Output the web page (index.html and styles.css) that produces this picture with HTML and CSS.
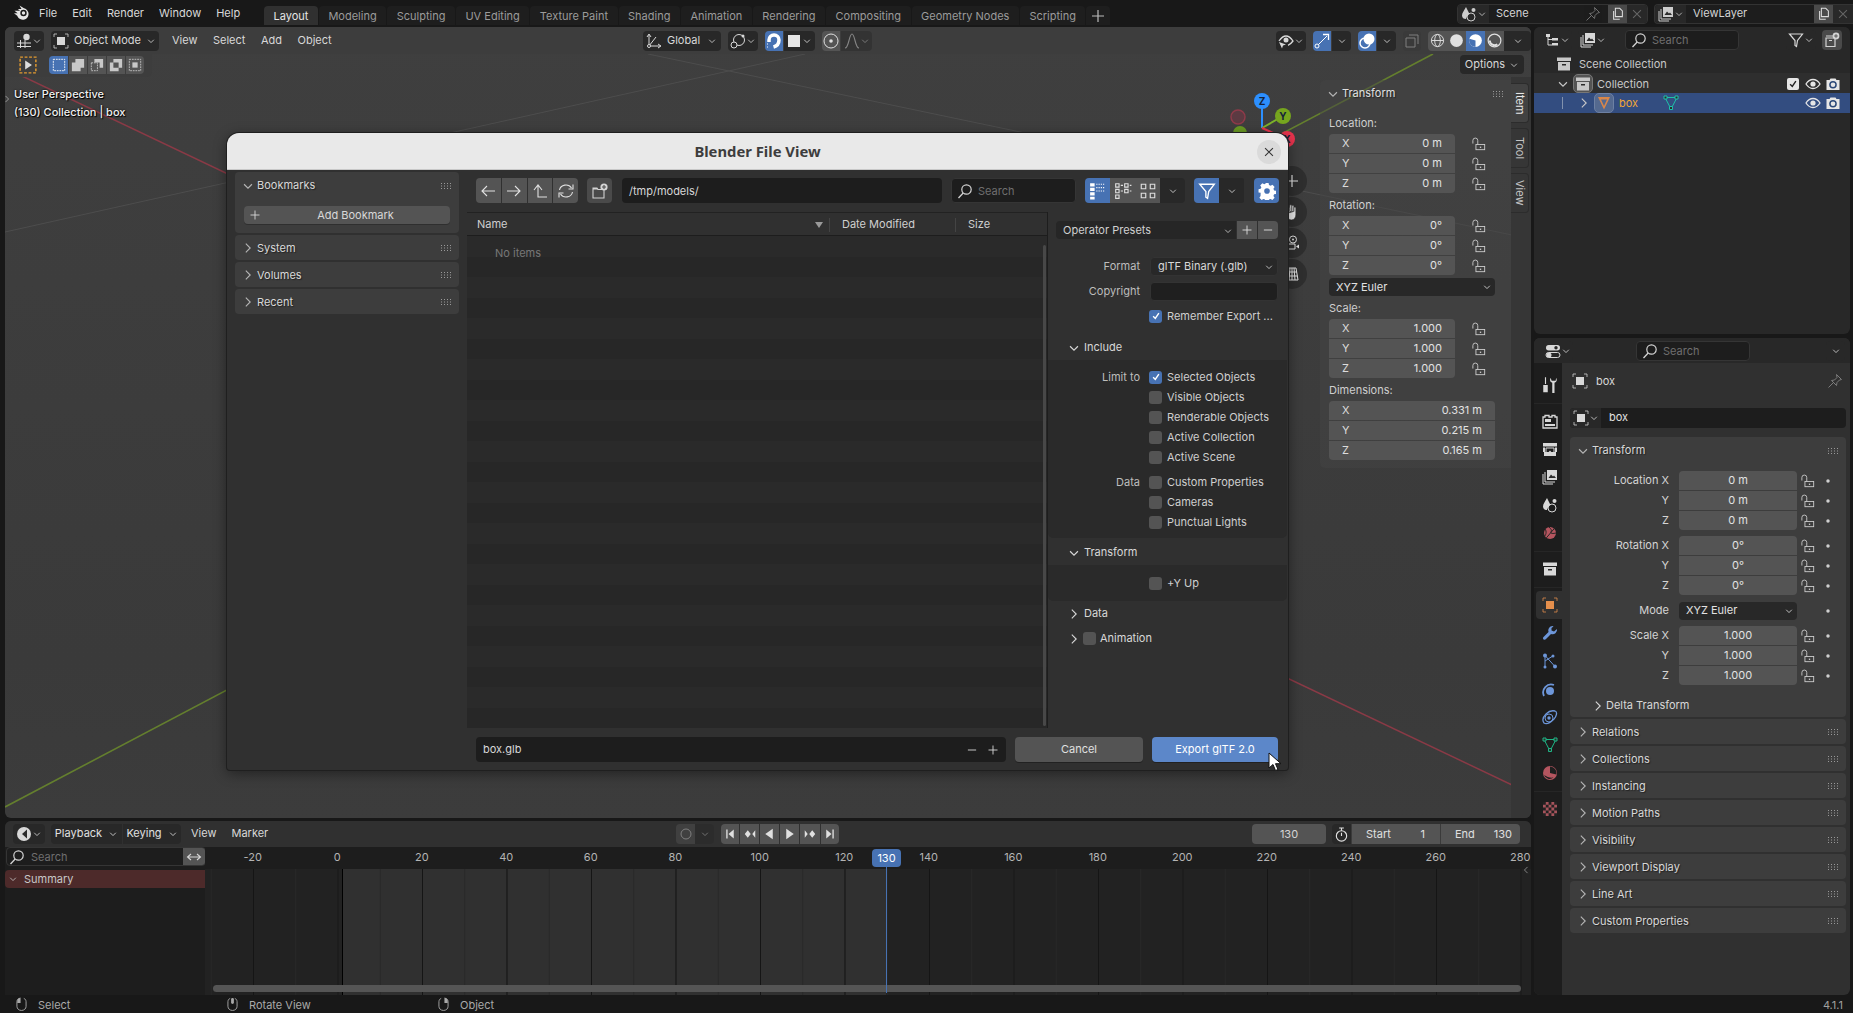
FILE: index.html
```html
<!DOCTYPE html>
<html lang="en">
<head>
    <meta charset="UTF-8">
    <title>Blender 4.1.1</title>
    <link rel="stylesheet" href="styles.css">
</head>
<body>
<svg class="defs" width="0" height="0">
    <symbol id="chev-d" viewBox="0 0 16 16"><path d="M3.5 6l4.5 4.5L12.500 6" fill="none" stroke="currentColor" stroke-width="1.300"/></symbol>
    <symbol id="chev-r" viewBox="0 0 16 16"><path d="M5.500 3l5 5-5 5" fill="none" stroke="currentColor" stroke-width="1.300"/></symbol>
    <symbol id="lock" viewBox="0 0 16 16"><path d="M1 7.500V4a2.800 2.800 0 0 1 5.600 0v4.500" fill="none" stroke="currentColor"/><rect x="4.500" y="8.500" width="10" height="6" fill="none" stroke="currentColor"/><rect x="9" y="11" width="1.500" height="1.500" fill="currentColor"/></symbol>
    <symbol id="dot" viewBox="0 0 16 16"><circle cx="8" cy="8" r="2" fill="currentColor"/></symbol>
    <symbol id="grip" viewBox="0 0 12 6"><path d="M1 0h1v1H1zM4 0h1v1H4zM7 0h1v1H7zM10 0h1v1h-1zM1 2.500h1v1H1zM4 2.500h1v1H4zM7 2.500h1v1H7zM10 2.500h1v1h-1zM1 5h1v1H1zM4 5h1v1H4zM7 5h1v1H7zM10 5h1v1h-1z" fill="currentColor"/></symbol>
    <symbol id="search" viewBox="0 0 16 16"><circle cx="9.500" cy="6.500" r="4.700" fill="none" stroke="currentColor" stroke-width="1.200"/><path d="M6.200 10L1.500 15" stroke="currentColor" stroke-width="1.300"/></symbol>
    <symbol id="obj" viewBox="0 0 16 16"><rect x="4" y="4" width="8" height="8" fill="currentColor"/><path d="M1 4V1h3M12 1h3v3M15 12v3h-3M4 15H1v-3" fill="none" stroke="currentColor" opacity=".75"/></symbol>
    <symbol id="logo" viewBox="0 0 18 16"><path d="M6.500 1.500l4.500 2.800a5.800 5.800 0 1 1-6.800 7.400L1 9.200h3.700L1.500 6.800h5.600L4.800 5h3.700z" fill="currentColor"/><circle cx="10.500" cy="9" r="3.200" fill="#181818"/><circle cx="10.500" cy="9" r="1.700" fill="currentColor"/></symbol>
    <symbol id="box" viewBox="0 0 16 16"><rect x="1" y="1.500" width="14" height="3.500" fill="currentColor"/><rect x="2" y="6" width="12" height="8.500" fill="currentColor"/><rect x="6" y="8" width="4" height="1.500" fill="#2a2a2a"/></symbol>
    <symbol id="eye" viewBox="0 0 16 16"><path d="M1 8c2-3.200 4.500-4.500 7-4.500S13 4.800 15 8c-2 3.200-4.500 4.500-7 4.500S3 11.200 1 8z" fill="none" stroke="currentColor" stroke-width="1.300"/><circle cx="8" cy="8" r="2.600" fill="currentColor"/></symbol>
    <symbol id="cam" viewBox="0 0 16 16"><path d="M1.500 4h3l1-1.500h5l1 1.500h3v10h-13z" fill="currentColor"/><circle cx="8" cy="8.700" r="3.800" fill="#2b4878"/><circle cx="8" cy="8.700" r="2.300" fill="currentColor"/></symbol>
    <symbol id="check" viewBox="0 0 14 14"><path d="M3 7.500l3 3L11 3" fill="none" stroke="currentColor" stroke-width="2"/></symbol>
    <symbol id="tri" viewBox="0 0 16 16"><path d="M2 2.500h12L8 14z" fill="none" stroke="currentColor" stroke-width="1"/><path d="M1 1h3v3H1zM12 1h3v3h-3zM6.500 11.500h3v3h-3z" fill="#2b2b2b" stroke="currentColor"/></symbol>
    <symbol id="pin" viewBox="0 0 16 16"><path d="M9.500 1.500l5 5-2 .5-2.500 2.500-.5 3-5-5 3-.5 2.500-2.500zM6 10l-4.500 4.500" fill="none" stroke="currentColor"/></symbol>
    <symbol id="copy" viewBox="0 0 16 16"><path d="M5 1.500h5l3 3V11H5z M3 4.500V14h7" fill="none" stroke="currentColor" stroke-width="1.200"/></symbol>
    <symbol id="x" viewBox="0 0 16 16"><path d="M3.500 3.500l9 9M12.500 3.500l-9 9" stroke="currentColor" stroke-width="1.200"/></symbol>
    <symbol id="plus" viewBox="0 0 16 16"><path d="M8 2v12M2 8h12" stroke="currentColor" stroke-width="1.200"/></symbol>
    <symbol id="minus" viewBox="0 0 16 16"><path d="M2.500 8h11" stroke="currentColor" stroke-width="1.200"/></symbol>
    <symbol id="layers" viewBox="0 0 16 16"><path d="M1 5v10h10M3 3v10h10" fill="none" stroke="currentColor"/><path d="M5 1h10v10H5z" fill="currentColor"/><path d="M6.500 9l2.500-3.500 2 2 1-1L14 9z" fill="#2b2b2b"/></symbol>
    <symbol id="scene" viewBox="0 0 16 16"><path d="M5 1c-2 3.500-4 6-4 8.500C1 12 2.800 13 5 13c.5-3 3-4.500 3.500-5z" fill="currentColor"/><circle cx="10" cy="11" r="4" fill="none" stroke="currentColor"/><circle cx="12.500" cy="4" r="2" fill="currentColor"/></symbol>
    <symbol id="arrow-l" viewBox="0 0 16 16"><path d="M15 8H2M7 3L2 8l5 5" fill="none" stroke="currentColor" stroke-width="1.100"/></symbol>
    <symbol id="arrow-r" viewBox="0 0 16 16"><path d="M1 8h13M9 3l5 5-5 5" fill="none" stroke="currentColor" stroke-width="1.100"/></symbol>
    <symbol id="arrow-u" viewBox="0 0 16 16"><path d="M2 7l4-5 4 5M6 2v12h9" fill="none" stroke="currentColor" stroke-width="1.100"/></symbol>
    <symbol id="refresh" viewBox="0 0 16 16"><path d="M1.500 7a6.500 6 0 0 1 12-2M15 1.500V6h-4.500M14.500 9a6.500 6 0 0 1-12 2M1 14.500V10h4.500" fill="none" stroke="currentColor" stroke-width="1.100"/></symbol>
    <symbol id="newdir" viewBox="0 0 16 16"><path d="M1 5h4l1 1.500h6V15H1z" fill="none" stroke="currentColor" stroke-width="1.100"/><path d="M1 5h4l1 1.500H1z" fill="currentColor"/><circle cx="12" cy="4" r="3.600" fill="currentColor"/><path d="M12 2v4M10 4h4" stroke="#4a4a4a" stroke-width="1.100"/></symbol>
    <symbol id="list-lg" viewBox="0 0 16 16"><path d="M1 1h4v3H1zM1 5h4v3H1zM1 9h4v3H1zM1 13h4v2.500H1z" fill="currentColor"/><path d="M6.500 2h8M6.500 5h8M6.500 8h8" stroke="currentColor" stroke-dasharray="1 1"/></symbol>
    <symbol id="list-sm" viewBox="0 0 16 16"><path d="M1.500 1.500h3v3h-3zM1.500 6.500h3v3h-3zM1.500 11.500h3v3h-3zM9.500 1.500h3v3h-3zM9.500 6.500h3v3h-3z" fill="none" stroke="currentColor"/><path d="M6 3h2M6 8h2M14 3h1.500M14 8h1.500" stroke="currentColor"/></symbol>
    <symbol id="thumbs" viewBox="0 0 16 16"><path d="M2 2h4v4H2zM10 2h4v4h-4zM2 10h4v4H2zM10 10h4v4h-4z" fill="none" stroke="currentColor"/></symbol>
    <symbol id="funnel" viewBox="0 0 16 16"><path d="M1.500 2h13L9.500 8.500l-1 6-1.500-1V8.500z" fill="none" stroke="currentColor" stroke-width="1.200"/></symbol>
    <symbol id="gear" viewBox="0 0 16 16"><path d="M6.500 1h3l.4 2 1.500.7 1.800-1 2 2.200-1.100 1.700.6 1.500 2 .4v3l-2 .3-.6 1.600 1.100 1.700-2.100 2-1.700-1-1.500.6-.4 2h-3l-.4-2-1.500-.6-1.700 1-2.100-2 1.100-1.700L2 10.300 0 10V7l2-.4.700-1.500-1.100-1.800 2-2.100 1.800 1 1.500-.7z" transform="scale(.94) translate(.5 -.1)" fill="currentColor"/><circle cx="8" cy="8" r="2.500" fill="#4772b3"/></symbol>
    <symbol id="hand" viewBox="0 0 16 16"><path d="M4.200 9V4.500a.9.9 0 0 1 1.800 0V8M6 7V2.500a.9.9 0 0 1 1.800 0V7.500M7.800 7V3a.9.9 0 0 1 1.800 0V7.500M9.600 7.500V4.500a.9.900 0 0 1 1.800 0V10c0 3-1.500 5-3.800 5-2 0-3-1-4-3L2 8.500c-.5-1 .8-1.800 1.500-1L4.200 9z" fill="#e6e6e6" stroke="#2e2e2e" stroke-width=".5"/></symbol>
    <symbol id="camview" viewBox="0 0 16 16"><circle cx="9" cy="4.500" r="3.500" fill="none" stroke="currentColor"/><circle cx="9" cy="4.500" r="1" fill="currentColor"/><path d="M2 9h9v5H2z" fill="none" stroke="currentColor"/><path d="M15 9.500v4l-3-2z" fill="currentColor"/></symbol>
    <symbol id="persp" viewBox="0 0 16 16"><path d="M4 2h8l2 12H2zM8 2v12M3 6h10M2.600 10h10.800M6 2L5 14M10 2l1 12" fill="none" stroke="currentColor"/></symbol>
    <symbol id="editor3d" viewBox="0 0 16 16"><path d="M1 10h14M1 13.500h14M4.500 7v8M9 7v8" stroke="currentColor"/><circle cx="10.500" cy="4" r="3.200" fill="currentColor"/></symbol>
    <symbol id="orient" viewBox="0 0 16 16"><path d="M3 13V2M3 13h11M3 13L10 4" fill="none" stroke="currentColor"/><path d="M1 4l2-3 2 3M12 11l3 2-3 2" fill="none" stroke="currentColor"/><circle cx="3" cy="13" r="1.500" fill="#262626" stroke="currentColor"/></symbol>
    <symbol id="pivot" viewBox="0 0 16 16"><circle cx="9" cy="7" r="5.500" fill="none" stroke="currentColor"/><circle cx="4" cy="12" r="3" fill="#262626" stroke="currentColor"/><circle cx="13" cy="3" r="1.500" fill="currentColor"/></symbol>
    <symbol id="magnet" viewBox="0 0 16 16"><path d="M3 9V7a5 5 0 0 1 10 0c0 3-2 6-5.500 7" fill="none" stroke="currentColor" stroke-width="3.500"/><path d="M1 11h2M1 14h2" stroke="currentColor" stroke-dasharray="1 1"/></symbol>
    <symbol id="prop" viewBox="0 0 16 16"><circle cx="8" cy="8" r="7" fill="none" stroke="currentColor"/><circle cx="8" cy="8" r="1.800" fill="currentColor"/></symbol>
    <symbol id="falloff" viewBox="0 0 16 16"><path d="M1 15C5 15 5 1 8 1s3 14 7 14" fill="none" stroke="currentColor" stroke-width="1.100"/></symbol>
    <symbol id="select-vis" viewBox="0 0 16 16"><path d="M1 8c2-3 4.500-5 7-5s5 2 7 5c-1.500 2-3 3.500-5 4.300" fill="none" stroke="currentColor" stroke-width="1.300"/><circle cx="8" cy="7" r="2.500" fill="currentColor"/><path d="M1 9l7 2.500-3 1-1 3z" fill="currentColor"/></symbol>
    <symbol id="gizmo" viewBox="0 0 16 16"><path d="M3 13L13 3" stroke="currentColor"/><path d="M9 1.500h5.500V7" fill="none" stroke="currentColor" stroke-width="1.300"/><circle cx="3" cy="13" r="2" fill="#4772b3" stroke="currentColor"/></symbol>
    <symbol id="overlay" viewBox="0 0 16 16"><circle cx="6" cy="10" r="5" fill="none" stroke="currentColor" stroke-width="1.500"/><circle cx="10" cy="6" r="5.500" fill="currentColor"/></symbol>
    <symbol id="xray" viewBox="0 0 16 16"><path d="M2 5h9v9H2zM5 2h9v9" fill="none" stroke="currentColor"/></symbol>
    <symbol id="wire" viewBox="0 0 16 16"><circle cx="8" cy="8" r="6.500" fill="none" stroke="currentColor"/><ellipse cx="8" cy="8" rx="3" ry="6.500" fill="none" stroke="currentColor"/><path d="M1.500 8h13" stroke="currentColor"/></symbol>
    <symbol id="solid" viewBox="0 0 16 16"><circle cx="8" cy="8" r="6.800" fill="currentColor"/></symbol>
    <symbol id="matprev" viewBox="0 0 16 16"><circle cx="8" cy="8" r="6.800" fill="currentColor"/><path d="M8 8v6.800a6.800 6.800 0 0 1-6.500-8.800z" fill="#4772b3"/></symbol>
    <symbol id="rendered" viewBox="0 0 16 16"><circle cx="8" cy="8" r="6.800" fill="none" stroke="currentColor" stroke-width="1.300"/><path d="M3 8a5 5 0 0 0 8 4" fill="none" stroke="currentColor" stroke-width="2"/></symbol>
    <symbol id="outl" viewBox="0 0 16 16"><path d="M2 2h4v3H2zM8 6h6v2.500H8zM8 11h6v2.500H8z" fill="currentColor"/><path d="M4 5v8h4M4 7.500h4" fill="none" stroke="currentColor"/></symbol>
    <symbol id="newcol" viewBox="0 0 16 16"><path d="M2 4h9M2 6h9v8.500H2zM5 8.500h3" fill="none" stroke="currentColor" stroke-width="1.200"/><circle cx="12" cy="4" r="3.400" fill="currentColor"/><path d="M12 2.200v3.600M10.200 4h3.600" stroke="#555" stroke-width="1"/></symbol>
    <symbol id="toggles" viewBox="0 0 16 16"><rect x="1" y="2" width="14" height="5.500" rx="2.700" fill="currentColor"/><rect x="1" y="9.500" width="14" height="5" rx="2.500" fill="none" stroke="currentColor"/><circle cx="11" cy="4.700" r="1.700" fill="#262626"/><circle cx="4" cy="12" r="2.500" fill="currentColor"/></symbol>
    <symbol id="tools" viewBox="0 0 16 16"><path d="M3.500 1h1v6h-1zM2 8h4v6.500H2z" fill="currentColor"/><path d="M9 1.500c-1 2-.5 4 1.500 4.500v9h2V6c2-.5 2.500-2.500 1.500-4.500l-.5 2.700h-3.500z" fill="currentColor" transform="translate(-.5)"/></symbol>
    <symbol id="render" viewBox="0 0 16 16"><path d="M1 4h2V2.500h4V4h3V2.500h3V4h2v11H1z" fill="none" stroke="currentColor" stroke-width="1.300"/><path d="M3 6h6v3H3zM3 11h10v2H3z" fill="currentColor"/></symbol>
    <symbol id="printer" viewBox="0 0 16 16"><path d="M1 2h14v3.500H1zM1 6.500h2v4.500h10V6.500h2V11h-1v4H2v-4H1z" fill="currentColor"/><path d="M4 7h8v7H4z" fill="none" stroke="currentColor"/><path d="M5 13l3-3.500L11 13z" fill="currentColor"/></symbol>
    <symbol id="globe" viewBox="0 0 16 16"><circle cx="8" cy="8" r="6" fill="currentColor"/><path d="M3 3.500C5 7 4 10 2 12M14 1.500L3 14.500M7 2c2 2 3 3 2 5s3 1.500 5 1" fill="none" stroke="#262626"/></symbol>
    <symbol id="wrench" viewBox="0 0 16 16"><path d="M10.500 1a4.500 4.500 0 0 0-4 6L1.500 12c-1 1-.5 2.500 1 2.800.6.100 1-.3 1.500-.8l5-5a4.500 4.500 0 0 0 6-5l-3 2.500-2.500-1 0-2.500 2-1.500c-.3-.3-.5-.5-1-.5z" fill="currentColor"/></symbol>
    <symbol id="nodes" viewBox="0 0 16 16"><path d="M3 2.500L13 13.500M3 2.500V14M3 8l7-4.500" stroke="currentColor" fill="none"/><circle cx="3" cy="2.500" r="2" fill="currentColor"/><circle cx="3" cy="14" r="1.500" fill="currentColor"/><circle cx="13" cy="13.500" r="2" fill="currentColor"/><circle cx="11" cy="3" r="1.500" fill="currentColor"/></symbol>
    <symbol id="physics" viewBox="0 0 16 16"><path d="M2 15a8 8 0 0 1 10-11" fill="none" stroke="currentColor" stroke-width="1.800"/><circle cx="8" cy="10" r="4" fill="currentColor"/></symbol>
    <symbol id="constraint" viewBox="0 0 16 16"><path d="M2 14C-1 10 2 7 4 5c2-2 5-4 9-3 3 1 1 6-1 8-3 3-7 6-10 4z" fill="none" stroke="currentColor" stroke-width="1.300"/><circle cx="7" cy="9" r="4" fill="none" stroke="currentColor"/><circle cx="7" cy="9" r="1.700" fill="currentColor"/></symbol>
    <symbol id="material" viewBox="0 0 16 16"><circle cx="8" cy="8" r="7" fill="currentColor"/><path d="M8 1.500v6.500l6.300 1.500A6.500 6.500 0 0 0 8 1.500z" fill="#1f1f1f"/><path d="M2 10a6 6 0 0 0 9.500 2.500C8 13 5 12 2 10z" fill="#1f1f1f"/></symbol>
    <symbol id="checker" viewBox="0 0 14 14"><rect width="14" height="14" fill="#a5535b"/><path d="M0 0h2.800v2.800H0zM5.600 0h2.800v2.800H5.600zM11.200 0H14v2.800h-2.800zM2.800 2.800h2.800v2.800H2.800zM8.400 2.800h2.800v2.800H8.400zM0 5.600h2.800v2.800H0zM5.600 5.600h2.800v2.800H5.600zM11.200 5.600H14v2.800h-2.800zM2.800 8.400h2.800v2.800H2.800zM8.400 8.400h2.800v2.800H8.400zM0 11.200h2.800V14H0zM5.600 11.200h2.800V14H5.600zM11.200 11.200H14V14h-2.800z" fill="#222"/></symbol>
    <symbol id="clock" viewBox="0 0 16 16"><circle cx="8" cy="9.500" r="5.500" fill="none" stroke="currentColor" stroke-width="1.200"/><path d="M5.500 1h5M8 1v3M8 6v3.500" stroke="currentColor" stroke-width="1.200"/></symbol>
    <symbol id="timeline-ic" viewBox="0 0 16 16"><circle cx="8" cy="8" r="7" fill="currentColor"/><path d="M11 3.500L6 8l5 4.500" fill="#2a2a2a"/></symbol>
    <symbol id="swap" viewBox="0 0 16 16"><path d="M1.500 8h13M5 5L1.500 8 5 11M11 5l3.500 3-3.500 3" fill="none" stroke="currentColor" stroke-width="1.100"/></symbol>
    <symbol id="first" viewBox="0 0 16 16"><path d="M3 2h1.800v12H3zM13 2v12L6 8z" fill="currentColor"/></symbol>
    <symbol id="prevkey" viewBox="0 0 16 16"><path d="M5 3l4 5-4 5-4-5zM15 3v10l-4-5z" fill="currentColor"/></symbol>
    <symbol id="rev" viewBox="0 0 16 16"><path d="M13 1v14L3 8z" fill="currentColor"/></symbol>
    <symbol id="play" viewBox="0 0 16 16"><path d="M3 1v14l10-7z" fill="currentColor"/></symbol>
    <symbol id="nextkey" viewBox="0 0 16 16"><path d="M11 3l-4 5 4 5 4-5zM1 3v10l4-5z" fill="currentColor"/></symbol>
    <symbol id="last" viewBox="0 0 16 16"><path d="M13 2h-1.800v12H13zM3 2v12l7-6z" fill="currentColor"/></symbol>
    <symbol id="rec" viewBox="0 0 16 16"><circle cx="8" cy="8" r="5" fill="none" stroke="currentColor"/></symbol>
    <symbol id="mouse-l" viewBox="0 0 11 15"><path d="M3 1.500C1.500 2 .6 3.500.6 5v5c0 2.500 2 4.400 4.900 4.400s4.900-1.900 4.900-4.400V5C10.400 3.500 9.500 2 8 1.500" fill="none" stroke="currentColor"/><path d="M1 6.500V4C1 2.500 2.500 1 4.500 .5v6z" fill="currentColor"/></symbol>
    <symbol id="mouse-m" viewBox="0 0 11 15"><path d="M3 1.500C1.500 2 .6 3.500.6 5v5c0 2.500 2 4.400 4.900 4.400s4.900-1.900 4.900-4.400V5C10.400 3.500 9.500 2 8 1.500" fill="none" stroke="currentColor"/><rect x="4" y="1" width="3" height="6.500" rx="1.500" fill="currentColor"/></symbol>
    <symbol id="mouse-r" viewBox="0 0 11 15"><path d="M3 1.500C1.500 2 .6 3.500.6 5v5c0 2.500 2 4.400 4.900 4.400s4.900-1.900 4.900-4.400V5C10.400 3.500 9.500 2 8 1.500" fill="none" stroke="currentColor"/><path d="M10 6.500V4C10 2.500 8.500 1 6.500 .5v6z" fill="currentColor"/></symbol>
    <symbol id="tool-sel" viewBox="0 0 16 16"><path d="M1 1h14v14H1z" fill="none" stroke="#e39b30" stroke-width="1.300" stroke-dasharray="2.500 1.500"/><path d="M5.500 4l6 4-6 4z" fill="#ddd"/></symbol>
    <symbol id="m-set" viewBox="0 0 16 16"><rect x="1.500" y="1.500" width="13" height="13" fill="none" stroke="currentColor" stroke-dasharray="2 1"/></symbol>
    <symbol id="m-ext" viewBox="0 0 16 16"><path d="M1 5h4V1h10v10h-4v4H1z" fill="currentColor"/></symbol>
    <symbol id="m-sub" viewBox="0 0 16 16"><path d="M5 1h10v10h-4V5H5z" fill="currentColor"/><path d="M1.500 5.500h7v9h-7z" fill="none" stroke="currentColor" stroke-dasharray="2 1"/></symbol>
    <symbol id="m-inv" viewBox="0 0 16 16"><path d="M5 1h10v10H11V5H5zM1 5h4v6h6v4H1z" fill="currentColor"/></symbol>
    <symbol id="m-and" viewBox="0 0 16 16"><rect x="1.500" y="1.500" width="13" height="13" fill="none" stroke="currentColor" stroke-dasharray="2 1"/><rect x="5" y="5" width="6" height="6" fill="currentColor"/></symbol>
</svg>

<div class="app">
    <header class="topbar">
        <svg class="logo"><use href="#logo"/></svg>
        <nav class="menus"><span>File</span><span>Edit</span><span>Render</span><span>Window</span><span>Help</span></nav>
        <nav class="tabs">
            <span class="tab active">Layout</span><span class="tab">Modeling</span><span class="tab">Sculpting</span><span class="tab">UV Editing</span><span class="tab">Texture Paint</span><span class="tab">Shading</span><span class="tab">Animation</span><span class="tab">Rendering</span><span class="tab">Compositing</span><span class="tab">Geometry Nodes</span><span class="tab">Scripting</span><span class="tab tab-add"><svg class="ic"><use href="#plus"/></svg></span>
        </nav>
        <div class="scene-pickers">
            <div class="picker scene-picker">
                <span class="picker-ic"><svg class="ic"><use href="#scene"/></svg><svg class="ic-xs"><use href="#chev-d"/></svg></span>
                <span class="picker-name">Scene<svg class="ic dim"><use href="#pin"/></svg></span>
                <span class="picker-copy"><svg class="ic"><use href="#copy"/></svg></span>
                <span class="picker-x"><svg class="ic"><use href="#x"/></svg></span>
            </div>
            <div class="picker layer-picker">
                <span class="picker-ic"><svg class="ic"><use href="#layers"/></svg><svg class="ic-xs"><use href="#chev-d"/></svg></span>
                <span class="picker-name">ViewLayer</span>
                <span class="picker-copy"><svg class="ic"><use href="#copy"/></svg></span>
                <span class="picker-x"><svg class="ic"><use href="#x"/></svg></span>
            </div>
        </div>
    </header>

    <main class="workspace">
        <div class="left-col">
            <section class="viewport">
                <svg class="scene-lines" width="1526" height="791">
                    <line x1="643" y1="27" x2="1526" y2="212" stroke="#4d4d4d"/>
                    <line x1="800" y1="27" x2="0" y2="205" stroke="#4d4d4d"/>
                    <line x1="0" y1="41" x2="1526" y2="767" stroke="#8a3a46" stroke-width="1.500"/>
                    <line x1="1428" y1="27" x2="0" y2="780" stroke="#647f2e" stroke-width="1.600"/>
                    <line x1="1257" y1="74" x2="1257" y2="101" stroke="#2c8fff" stroke-width="2"/>
                    <line x1="1278" y1="89" x2="1257" y2="101" stroke="#7db32a" stroke-width="2"/>
                    <line x1="1282" y1="112" x2="1257" y2="101" stroke="#e8334d" stroke-width="2"/>
                    <circle cx="1233" cy="90" r="7" fill="#5c3a42" stroke="#8f3a49" stroke-width="1.500"/>
                    <circle cx="1235" cy="106" r="7" fill="#6a9a23"/>
                    <circle cx="1282" cy="112" r="8" fill="#e8334d"/>
                    <circle cx="1278" cy="89" r="8" fill="#76a51e"/>
                    <circle cx="1257" cy="74" r="8" fill="#2c8fff"/>
                    <text x="1257" y="78" class="axis-letter">Z</text>
                    <text x="1278" y="93" class="axis-letter">Y</text>
                    <text x="1282" y="116" class="axis-letter">X</text>
                </svg>
                <div class="vp-head">
                    <span class="btn dark w30"><svg class="ic"><use href="#editor3d"/></svg><svg class="ic-xs"><use href="#chev-d"/></svg></span>
                    <span class="btn dark mode-btn"><svg class="ic"><use href="#obj"/></svg><span class="grow">Object Mode</span><svg class="ic-xs"><use href="#chev-d"/></svg></span>
                    <nav class="vp-menu"><span>View</span><span>Select</span><span>Add</span><span>Object</span></nav>
                    <div class="center-tools">
                        <span class="btn dark orient-btn"><svg class="ic"><use href="#orient"/></svg><span class="grow">Global</span><svg class="ic-xs"><use href="#chev-d"/></svg></span>
                        <span class="btn dark w30"><svg class="ic"><use href="#pivot"/></svg><svg class="ic-xs"><use href="#chev-d"/></svg></span>
                        <span class="joined"><span class="seg blue"><svg class="ic"><use href="#magnet"/></svg></span><span class="seg dark w32"><span class="snap-square"></span><svg class="ic-xs"><use href="#chev-d"/></svg></span></span>
                        <span class="joined"><span class="seg grey"><svg class="ic"><use href="#prop"/></svg></span><span class="seg dark w32 dim"><svg class="ic"><use href="#falloff"/></svg><svg class="ic-xs"><use href="#chev-d"/></svg></span></span>
                    </div>
                    <div class="right-tools">
                        <span class="btn dark w30"><svg class="ic"><use href="#select-vis"/></svg><svg class="ic-xs"><use href="#chev-d"/></svg></span>
                        <span class="joined"><span class="seg blue"><svg class="ic"><use href="#gizmo"/></svg></span><span class="seg dark w20"><svg class="ic-xs"><use href="#chev-d"/></svg></span></span>
                        <span class="joined"><span class="seg blue"><svg class="ic"><use href="#overlay"/></svg></span><span class="seg dark w20"><svg class="ic-xs"><use href="#chev-d"/></svg></span></span>
                        <span class="seg-alone"><svg class="ic dim"><use href="#xray"/></svg></span>
                        <span class="joined shading"><span class="seg grey w18"><svg class="ic"><use href="#wire"/></svg></span><span class="seg grey w18"><svg class="ic"><use href="#solid"/></svg></span><span class="seg blue w18"><svg class="ic"><use href="#matprev"/></svg></span><span class="seg grey w18"><svg class="ic"><use href="#rendered"/></svg></span><span class="seg dark w27"><svg class="ic-xs"><use href="#chev-d"/></svg></span></span>
                    </div>
                </div>
                <div class="vp-tools">
                    <svg class="ic-18"><use href="#tool-sel"/></svg>
                    <span class="joined select-modes"><span class="seg blue w19"><svg class="ic"><use href="#m-set"/></svg></span><span class="seg grey w19"><svg class="ic"><use href="#m-ext"/></svg></span><span class="seg grey w19"><svg class="ic"><use href="#m-sub"/></svg></span><span class="seg grey w19"><svg class="ic"><use href="#m-inv"/></svg></span><span class="seg grey w19"><svg class="ic"><use href="#m-and"/></svg></span></span>
                </div>
                <div class="vp-info">
                    <div>User Perspective</div>
                    <div>(130) Collection | box</div>
                </div>
                <svg class="ic-xs region-arrow"><use href="#chev-r"/></svg>
                <span class="btn dark options">Options<svg class="ic-xs"><use href="#chev-d"/></svg></span>
                <div class="nav-gizmos">
                    <span class="nav-btn"><svg class="ic"><use href="#plus"/></svg></span>
                    <span class="nav-btn"><svg class="ic-18"><use href="#hand"/></svg></span>
                    <span class="nav-btn"><svg class="ic"><use href="#camview"/></svg></span>
                    <span class="nav-btn"><svg class="ic"><use href="#persp"/></svg></span>
                </div>
                <div class="vp-tabstrip">
                    <span class="vtab"><b>Item</b></span>
                    <span class="vtab dark-tab"><b>Tool</b></span>
                    <span class="vtab dark-tab"><b>View</b></span>
                </div>
                <aside class="n-panel">
                    <div class="n-head"><svg class="ic-14 chev"><use href="#chev-d"/></svg>Transform<svg class="grip"><use href="#grip"/></svg></div>
                    <div class="n-label first">Location:</div>
                    <div class="n-group locks">
                        <div class="n-row"><span class="nf top"><em>X</em>0 m</span><svg class="ic lock"><use href="#lock"/></svg></div>
                        <div class="n-row"><span class="nf"><em>Y</em>0 m</span><svg class="ic lock"><use href="#lock"/></svg></div>
                        <div class="n-row"><span class="nf bot"><em>Z</em>0 m</span><svg class="ic lock"><use href="#lock"/></svg></div>
                    </div>
                    <div class="n-label">Rotation:</div>
                    <div class="n-group locks">
                        <div class="n-row"><span class="nf top"><em>X</em>0°</span><svg class="ic lock"><use href="#lock"/></svg></div>
                        <div class="n-row"><span class="nf"><em>Y</em>0°</span><svg class="ic lock"><use href="#lock"/></svg></div>
                        <div class="n-row"><span class="nf bot"><em>Z</em>0°</span><svg class="ic lock"><use href="#lock"/></svg></div>
                    </div>
                    <span class="euler">XYZ Euler<svg class="ic-xs"><use href="#chev-d"/></svg></span>
                    <div class="n-label">Scale:</div>
                    <div class="n-group locks">
                        <div class="n-row"><span class="nf top"><em>X</em>1.000</span><svg class="ic lock"><use href="#lock"/></svg></div>
                        <div class="n-row"><span class="nf"><em>Y</em>1.000</span><svg class="ic lock"><use href="#lock"/></svg></div>
                        <div class="n-row"><span class="nf bot"><em>Z</em>1.000</span><svg class="ic lock"><use href="#lock"/></svg></div>
                    </div>
                    <div class="n-label">Dimensions:</div>
                    <div class="n-group wide">
                        <div class="n-row"><span class="nf top"><em>X</em>0.331 m</span></div>
                        <div class="n-row"><span class="nf"><em>Y</em>0.215 m</span></div>
                        <div class="n-row"><span class="nf bot"><em>Z</em>0.165 m</span></div>
                    </div>
                </aside>
            </section>

            <section class="timeline">
                <div class="tl-head">
                    <span class="btn dark w32"><svg class="ic"><use href="#timeline-ic"/></svg><svg class="ic-xs"><use href="#chev-d"/></svg></span>
                    <span class="joined tl-menus"><span class="seg dark playback">Playback<svg class="ic-xs"><use href="#chev-d"/></svg></span><span class="seg dark keying">Keying<svg class="ic-xs"><use href="#chev-d"/></svg></span></span>
                    <nav class="vp-menu tl-plain"><span>View</span><span>Marker</span></nav>
                    <span class="joined rec-btn"><span class="seg grey w19 dim"><svg class="ic"><use href="#rec"/></svg></span><span class="seg dark w19 dim"><svg class="ic-xs"><use href="#chev-d"/></svg></span></span>
                    <span class="joined transport"><span class="seg grey w19"><svg class="ic"><use href="#first"/></svg></span><span class="seg grey w19"><svg class="ic"><use href="#prevkey"/></svg></span><span class="seg grey w20"><svg class="ic"><use href="#rev"/></svg></span><span class="seg grey w20"><svg class="ic"><use href="#play"/></svg></span><span class="seg grey w20"><svg class="ic"><use href="#nextkey"/></svg></span><span class="seg grey w19"><svg class="ic"><use href="#last"/></svg></span></span>
                    <span class="frame-now">130</span>
                    <span class="joined frame-range"><span class="seg dark clock"><svg class="ic"><use href="#clock"/></svg></span><span class="seg grey range start-seg"><span>Start</span><span>1</span></span><span class="seg grey range end-seg"><span>End</span><span>130</span></span></span>
                </div>
                <div class="tl-body">
                    <div class="tl-channels">
                        <div class="tl-search"><svg class="ic"><use href="#search"/></svg><span class="grow ph">Search</span><span class="swap"><svg class="ic"><use href="#swap"/></svg></span></div>
                        <div class="summary"><svg class="ic-xs"><use href="#chev-d"/></svg>Summary</div>
                    </div>
                    <div class="tl-main">
                        <div class="ruler">
                            <span>-20</span><span>0</span><span>20</span><span>40</span><span>60</span><span>80</span><span>100</span><span>120</span><span>140</span><span>160</span><span>180</span><span>200</span><span>220</span><span>240</span><span>260</span><span>280</span>
                        </div>
                        <div class="track"><span class="start-line"></span><span class="tl-scroll"></span></div>
                        <span class="playhead">130</span>
                        <svg class="ic-xs tl-collapse"><use href="#chev-r"/></svg>
                    </div>
                </div>
            </section>
        </div>

        <div class="right-col">
            <section class="outliner">
                <div class="ol-head">
                    <span class="btn dark w30"><svg class="ic"><use href="#outl"/></svg><svg class="ic-xs"><use href="#chev-d"/></svg></span>
                    <span class="btn dark w30"><svg class="ic"><use href="#layers"/></svg><svg class="ic-xs"><use href="#chev-d"/></svg></span>
                    <span class="search ol-search"><svg class="ic"><use href="#search"/></svg><span class="ph">Search</span></span>
                    <span class="btn dark w30 ml-auto"><svg class="ic"><use href="#funnel"/></svg><svg class="ic-xs"><use href="#chev-d"/></svg></span>
                    <span class="seg-alone grey-alone"><svg class="ic"><use href="#newcol"/></svg></span>
                </div>
                <div class="ol-row scene-row"><svg class="ic"><use href="#box"/></svg><span>Scene Collection</span></div>
                <div class="ol-row col-row"><svg class="ic-14"><use href="#chev-d"/></svg><span class="ol-ic"><svg class="ic"><use href="#box"/></svg></span><span>Collection</span>
                    <span class="ol-right"><span class="ol-check"><svg class="ic-10"><use href="#check"/></svg></span><svg class="ic"><use href="#eye"/></svg><svg class="ic"><use href="#cam"/></svg></span></div>
                <div class="ol-row box-row"><i class="tree-line"></i><svg class="ic-14"><use href="#chev-r"/></svg><span class="ol-ic orange"><svg class="ic" viewBox="0 0 16 16"><path d="M2 2h12L8 14.500zM5 4.500L8 11l3-6.500z" fill="#d9874a" fill-rule="evenodd"/></svg></span><span class="orange-text">box</span><svg class="ic teal"><use href="#tri"/></svg>
                    <span class="ol-right"><svg class="ic"><use href="#eye"/></svg><svg class="ic"><use href="#cam"/></svg></span></div>
            </section>

            <section class="properties">
                <div class="pr-head">
                    <span class="btn dark w30"><svg class="ic"><use href="#toggles"/></svg><svg class="ic-xs"><use href="#chev-d"/></svg></span>
                    <span class="search pr-search"><svg class="ic"><use href="#search"/></svg><span class="ph">Search</span></span>
                    <span class="btn dark w19 ml-auto"><svg class="ic-xs"><use href="#chev-d"/></svg></span>
                </div>
                <div class="pr-body">
                    <nav class="pr-tabs">
                        <span class="pt"><svg class="ic-18 c-light"><use href="#tools"/></svg></span>
                        <i class="pt-sep"></i>
                        <span class="pt"><svg class="ic-16 c-light"><use href="#render"/></svg></span>
                        <span class="pt"><svg class="ic-16 c-light"><use href="#printer"/></svg></span>
                        <span class="pt"><svg class="ic-16 c-light"><use href="#layers"/></svg></span>
                        <span class="pt"><svg class="ic-16 c-light"><use href="#scene"/></svg></span>
                        <span class="pt"><svg class="ic-16 c-red"><use href="#globe"/></svg></span>
                        <i class="pt-sep"></i>
                        <span class="pt"><svg class="ic-16 c-light"><use href="#box"/></svg></span>
                        <i class="pt-sep"></i>
                        <span class="pt active"><svg class="ic-16 c-orange"><use href="#obj"/></svg></span>
                        <span class="pt"><svg class="ic-16 c-blue"><use href="#wrench"/></svg></span>
                        <span class="pt"><svg class="ic-16 c-blue"><use href="#nodes"/></svg></span>
                        <span class="pt"><svg class="ic-16 c-blue"><use href="#physics"/></svg></span>
                        <span class="pt"><svg class="ic-16 c-blue"><use href="#constraint"/></svg></span>
                        <span class="pt"><svg class="ic-16 c-green"><use href="#tri"/></svg></span>
                        <span class="pt"><svg class="ic-16 c-red"><use href="#material"/></svg></span>
                        <i class="pt-sep"></i>
                        <span class="pt"><svg class="ic-14"><use href="#checker"/></svg></span>
                    </nav>
                    <div class="pr-content">
                        <div class="pr-title"><svg class="ic"><use href="#obj"/></svg><span>box</span><svg class="ic dim ml-auto"><use href="#pin"/></svg></div>
                        <div class="pr-name"><span class="pr-name-ic"><svg class="ic"><use href="#obj"/></svg><svg class="ic-xs"><use href="#chev-d"/></svg></span><span class="pr-name-text">box</span></div>
                        <div class="panel open">
                            <div class="panel-head"><svg class="ic-14 chev"><use href="#chev-d"/></svg>Transform<svg class="grip"><use href="#grip"/></svg></div>
                            <div class="pg">
                                <div class="pf"><label>Location X</label><span class="nfc top">0 m</span><svg class="ic lock"><use href="#lock"/></svg><svg class="ic anim"><use href="#dot"/></svg></div>
                                <div class="pf"><label>Y</label><span class="nfc">0 m</span><svg class="ic lock"><use href="#lock"/></svg><svg class="ic anim"><use href="#dot"/></svg></div>
                                <div class="pf"><label>Z</label><span class="nfc bot">0 m</span><svg class="ic lock"><use href="#lock"/></svg><svg class="ic anim"><use href="#dot"/></svg></div>
                            </div>
                            <div class="pg">
                                <div class="pf"><label>Rotation X</label><span class="nfc top">0°</span><svg class="ic lock"><use href="#lock"/></svg><svg class="ic anim"><use href="#dot"/></svg></div>
                                <div class="pf"><label>Y</label><span class="nfc">0°</span><svg class="ic lock"><use href="#lock"/></svg><svg class="ic anim"><use href="#dot"/></svg></div>
                                <div class="pf"><label>Z</label><span class="nfc bot">0°</span><svg class="ic lock"><use href="#lock"/></svg><svg class="ic anim"><use href="#dot"/></svg></div>
                            </div>
                            <div class="pg">
                                <div class="pf"><label>Mode</label><span class="sel">XYZ Euler<svg class="ic-xs"><use href="#chev-d"/></svg></span><i></i><svg class="ic anim"><use href="#dot"/></svg></div>
                            </div>
                            <div class="pg">
                                <div class="pf"><label>Scale X</label><span class="nfc top">1.000</span><svg class="ic lock"><use href="#lock"/></svg><svg class="ic anim"><use href="#dot"/></svg></div>
                                <div class="pf"><label>Y</label><span class="nfc">1.000</span><svg class="ic lock"><use href="#lock"/></svg><svg class="ic anim"><use href="#dot"/></svg></div>
                                <div class="pf"><label>Z</label><span class="nfc bot">1.000</span><svg class="ic lock"><use href="#lock"/></svg><svg class="ic anim"><use href="#dot"/></svg></div>
                            </div>
                            <div class="delta"><svg class="ic-14"><use href="#chev-r"/></svg>Delta Transform</div>
                        </div>
                        <div class="panel"><div class="panel-head"><svg class="ic-14 chev"><use href="#chev-r"/></svg>Relations<svg class="grip"><use href="#grip"/></svg></div></div>
                        <div class="panel"><div class="panel-head"><svg class="ic-14 chev"><use href="#chev-r"/></svg>Collections<svg class="grip"><use href="#grip"/></svg></div></div>
                        <div class="panel"><div class="panel-head"><svg class="ic-14 chev"><use href="#chev-r"/></svg>Instancing<svg class="grip"><use href="#grip"/></svg></div></div>
                        <div class="panel"><div class="panel-head"><svg class="ic-14 chev"><use href="#chev-r"/></svg>Motion Paths<svg class="grip"><use href="#grip"/></svg></div></div>
                        <div class="panel"><div class="panel-head"><svg class="ic-14 chev"><use href="#chev-r"/></svg>Visibility<svg class="grip"><use href="#grip"/></svg></div></div>
                        <div class="panel"><div class="panel-head"><svg class="ic-14 chev"><use href="#chev-r"/></svg>Viewport Display<svg class="grip"><use href="#grip"/></svg></div></div>
                        <div class="panel"><div class="panel-head"><svg class="ic-14 chev"><use href="#chev-r"/></svg>Line Art<svg class="grip"><use href="#grip"/></svg></div></div>
                        <div class="panel"><div class="panel-head"><svg class="ic-14 chev"><use href="#chev-r"/></svg>Custom Properties<svg class="grip"><use href="#grip"/></svg></div></div>
                    </div>
                </div>
            </section>
        </div>
    </main>

    <footer class="statusbar">
        <span class="st"><svg class="mouse"><use href="#mouse-l"/></svg>Select</span>
        <span class="st"><svg class="mouse"><use href="#mouse-m"/></svg>Rotate View</span>
        <span class="st"><svg class="mouse"><use href="#mouse-r"/></svg>Object</span>
        <span class="version">4.1.1</span>
    </footer>

    <div class="dialog">
        <div class="dlg-title"><span>Blender File View</span><span class="dlg-close"><svg class="ic"><use href="#x"/></svg></span></div>
        <div class="dlg-body">
            <aside class="dlg-side">
                <div class="fp-panel"><div class="panel-head"><svg class="ic-14 chev"><use href="#chev-d"/></svg>Bookmarks<svg class="grip"><use href="#grip"/></svg></div>
                    <span class="add-bm"><svg class="ic-xs"><use href="#plus"/></svg><span>Add Bookmark</span></span></div>
                <div class="fp-panel"><div class="panel-head"><svg class="ic-14 chev"><use href="#chev-r"/></svg>System<svg class="grip"><use href="#grip"/></svg></div></div>
                <div class="fp-panel"><div class="panel-head"><svg class="ic-14 chev"><use href="#chev-r"/></svg>Volumes<svg class="grip"><use href="#grip"/></svg></div></div>
                <div class="fp-panel"><div class="panel-head"><svg class="ic-14 chev"><use href="#chev-r"/></svg>Recent<svg class="grip"><use href="#grip"/></svg></div></div>
            </aside>
            <div class="dlg-main">
                <div class="fb-tools">
                    <span class="joined fb-nav"><span class="seg grey w26"><svg class="ic"><use href="#arrow-l"/></svg></span><span class="seg grey w26"><svg class="ic"><use href="#arrow-r"/></svg></span><span class="seg grey w26"><svg class="ic"><use href="#arrow-u"/></svg></span><span class="seg grey w26"><svg class="ic"><use href="#refresh"/></svg></span></span>
                    <span class="seg-alone grey-alone w25a"><svg class="ic"><use href="#newdir"/></svg></span>
                    <span class="path">/tmp/models/</span>
                    <span class="search fb-search"><svg class="ic"><use href="#search"/></svg><span class="ph">Search</span></span>
                    <span class="joined fb-view"><span class="seg blue w25"><svg class="ic"><use href="#list-lg"/></svg></span><span class="seg grey w25"><svg class="ic"><use href="#list-sm"/></svg></span><span class="seg grey w25"><svg class="ic"><use href="#thumbs"/></svg></span><span class="seg dark w25"><svg class="ic-xs"><use href="#chev-d"/></svg></span></span>
                    <span class="joined fb-filter"><span class="seg blue w25"><svg class="ic"><use href="#funnel"/></svg></span><span class="seg dark w25"><svg class="ic-xs"><use href="#chev-d"/></svg></span></span>
                    <span class="seg-alone gear-btn"><svg class="ic"><use href="#gear"/></svg></span>
                </div>
                <div class="fb-mid">
                    <div class="fb-list">
                        <div class="fb-cols"><span class="col-name">Name<i class="sort"></i></span><span class="col-date">Date Modified</span><span class="col-size">Size</span></div>
                        <div class="fb-rows"><span class="no-items">No items</span><i class="fb-scroll"></i></div>
                    </div>
                    <div class="op-panel">
                        <div class="presets"><span class="presets-name">Operator Presets<svg class="ic-xs"><use href="#chev-d"/></svg></span><span class="preset-btn"><svg class="ic-12"><use href="#plus"/></svg></span><span class="preset-btn"><svg class="ic-12"><use href="#minus"/></svg></span></div>
                        <div class="op-row format"><label>Format</label><span class="sel op-sel">glTF Binary (.glb)<svg class="ic-xs"><use href="#chev-d"/></svg></span></div>
                        <div class="op-row copyright"><label>Copyright</label><span class="sel op-sel"></span></div>
                        <div class="op-check remember"><label></label><i class="cb on"><svg class="ic-10"><use href="#check"/></svg></i><span>Remember Export ...</span></div>
                        <div class="op-head include"><svg class="ic-14"><use href="#chev-d"/></svg>Include</div>
                        <div class="op-sub">
                            <div class="op-check"><label>Limit to</label><i class="cb on"><svg class="ic-10"><use href="#check"/></svg></i><span>Selected Objects</span></div>
                            <div class="op-check"><label></label><i class="cb"></i><span>Visible Objects</span></div>
                            <div class="op-check"><label></label><i class="cb"></i><span>Renderable Objects</span></div>
                            <div class="op-check"><label></label><i class="cb"></i><span>Active Collection</span></div>
                            <div class="op-check"><label></label><i class="cb"></i><span>Active Scene</span></div>
                            <div class="op-check gap5"><label>Data</label><i class="cb"></i><span>Custom Properties</span></div>
                            <div class="op-check"><label></label><i class="cb"></i><span>Cameras</span></div>
                            <div class="op-check"><label></label><i class="cb"></i><span>Punctual Lights</span></div>
                        </div>
                        <div class="op-head"><svg class="ic-14"><use href="#chev-d"/></svg>Transform</div>
                        <div class="op-sub short">
                            <div class="op-check"><label></label><i class="cb"></i><span>+Y Up</span></div>
                        </div>
                        <div class="op-head plain"><svg class="ic-14"><use href="#chev-r"/></svg>Data</div>
                        <div class="op-head plain"><svg class="ic-14"><use href="#chev-r"/></svg><i class="cb anim-cb"></i>Animation</div>
                    </div>
                </div>
                <div class="fb-bottom">
                    <span class="file-name"><span class="grow">box.glb</span><svg class="ic-12"><use href="#minus"/></svg><svg class="ic-12"><use href="#plus"/></svg></span>
                    <span class="act cancel">Cancel</span>
                    <span class="act export">Export glTF 2.0</span>
                </div>
            </div>
        </div>
    </div>
    <svg class="cursor" width="14" height="20" viewBox="0 0 14 20"><path d="M1 1v15l4-3.500 2.500 6 2.500-1-2.500-5.800H13z" fill="#fff" stroke="#111"/></svg>
</div>
</body>
</html>
```

FILE: styles.css
```css
* { box-sizing: border-box; }

html, body {
    margin: 0;
    height: 100%;
    overflow: hidden;
}

body {
    background: #181818;
    color: #d4d4d4;
    font-family: Inter, "Noto Sans", sans-serif;
    font-size: 11px;
    line-height: 1;
    white-space: nowrap;
}

.defs { position: absolute; }

em, i { font-style: normal; }

.ic { width: 16px; height: 16px; flex: none; color: inherit; }
.ic-xs { width: 10px; height: 10px; flex: none; }
.ic-10 { width: 10px; height: 10px; }
.ic-12 { width: 12px; height: 12px; flex: none; }
.ic-14 { width: 14px; height: 14px; flex: none; }
.ic-16 { width: 16px; height: 16px; flex: none; }
.ic-18 { width: 18px; height: 18px; flex: none; }
.dim { opacity: .45; }
.grow { flex: 1; }
.ml-auto { margin-left: auto; }
.ph { color: #6f6f6f; padding-top: 1px; }

.app {
    width: 1853px;
    height: 1013px;
    display: flex;
    flex-direction: column;
    position: relative;
}

/* top bar */
.topbar {
    height: 27px;
    flex: none;
    display: flex;
    align-items: center;
    background: #181818;
    padding-left: 13px;
}
.logo { width: 18px; height: 16px; color: #e6e6e6; margin-bottom: 4px; flex: none; }
.menus { display: flex; gap: 15px; width: 225px; margin-left: 8px; color: #d8d8d8; }
.tabs { display: flex; align-self: flex-end; gap: 1px; margin: 0 0 2px 0; height: 19px; }
.tab {
    padding: 1px 9.500px 0;
    display: flex;
    align-items: center;
    background: #1e1e1e;
    color: #9b9b9b;
    border-radius: 4px 4px 0 0;
}
.tab.active { background: #303030; color: #e6e6e6; }
.tab-add { padding: 0 4px; color: #bbb; }
.scene-pickers { margin-left: auto; display: flex; gap: 6px; }
.picker {
    height: 20px;
    display: flex;
    align-items: stretch;
    background: #1d1d1d;
    border: 1px solid #333;
    border-radius: 4px;
    overflow: hidden;
}
.scene-picker { width: 191px; }
.layer-picker { width: 199px; border-right: 0; border-radius: 4px 0 0 4px; }
.picker-ic { width: 31px; background: #282828; display: flex; align-items: center; justify-content: center; color: #ccc; }
.picker-name { flex: 1; padding: 0 7px; display: flex; align-items: center; justify-content: space-between; color: #d4d4d4; }
.picker-copy { width: 19px; background: #4a4a4a; display: flex; align-items: center; justify-content: center; color: #ddd; }
.picker-copy .ic, .picker-x .ic { width: 14px; height: 14px; }
.picker-x { width: 20px; background: #282828; display: flex; align-items: center; justify-content: center; color: #666; }

/* main split */
.workspace {
    flex: 1;
    display: flex;
    gap: 3px;
    padding-left: 5px;
    min-height: 0;
}
.left-col { width: 1526px; display: flex; flex-direction: column; gap: 3px; }
.right-col { width: 316px; display: flex; flex-direction: column; gap: 4px; }

/* shared buttons */
.btn {
    height: 20px;
    display: inline-flex;
    align-items: center;
    justify-content: center;
    border-radius: 4px;
    flex: none;
    color: #d8d8d8;
}
.dark { background: #282828; }
.w30 { width: 30px; }
.w32 { width: 32px; }
.w19 { width: 19px; }
.joined { display: inline-flex; height: 20px; border-radius: 4px; overflow: hidden; flex: none; gap: 1px; }
.seg { height: 100%; display: flex; align-items: center; justify-content: center; color: #e0e0e0; }
.seg.blue { background: #4772b3; width: 18px; color: #fff; }
.seg.grey { background: #545454; width: 18px; }
.seg.w18 { width: 19px; }
.seg.w19 { width: 19px; }
.seg.w20 { width: 20px; }
.seg.w25 { width: 25px; }
.seg.w26 { width: 25px; }
.seg.w27 { width: 27px; }
.seg.w32 { width: 31px; }
.seg-alone { width: 18px; height: 20px; border-radius: 4px; background: #3a3a3a; display: flex; align-items: center; justify-content: center; flex: none; }
.grey-alone { background: #4a4a4a; }
.search {
    height: 20px;
    display: flex;
    align-items: center;
    gap: 5px;
    padding-left: 5px;
    background: #1d1d1d;
    border: 1px solid #353535;
    border-radius: 4px;
    color: #d4d4d4;
}
.sel {
    display: flex;
    align-items: center;
    justify-content: space-between;
    background: #282828;
    border-radius: 4px;
    padding: 0 3px 0 7px;
}

/* 3d viewport */
.viewport {
    height: 791px;
    position: relative;
    overflow: hidden;
    border-radius: 6px;
    background: linear-gradient(#3f3f3f, #3a3a3a 80%, #3c3c3c);
}
.scene-lines { position: absolute; inset: 0; }
.axis-letter { font: bold 10px Inter, sans-serif; text-anchor: middle; fill: #14223a; }
.vp-head {
    height: 27px;
    display: flex;
    align-items: center;
    gap: 7px;
    padding-left: 9px;
    background: #3d3d3d;
    position: relative;
}
.mode-btn { width: 108px; padding: 0 4px 0 3px; gap: 5px; }
.vp-menu { display: flex; gap: 15.500px; margin-left: 6px; color: #d8d8d8; }
.center-tools { position: absolute; left: 638px; display: flex; gap: 7px; }
.orient-btn { width: 78px; padding: 0 4px 0 3px; gap: 5px; }
.right-tools { position: absolute; left: 1271px; display: flex; gap: 7px; }
.right-tools .seg.w20 { width: 19px; }
.vp-tools {
    position: relative;
    width: 147px;
    height: 23px;
    display: flex;
    align-items: center;
    gap: 12px;
    padding: 0 0 2px 14px;
    background: #3d3d3d;
    border-radius: 0 0 5px 0;
}
.select-modes { height: 18px; gap: 0; }
.select-modes .seg { color: #c8c8c8; box-shadow: inset 1px 0 0 #3d3d3d; }
.select-modes .seg.blue { color: #fff; box-shadow: none; }
.select-modes .ic { width: 14px; height: 14px; }
.snap-square { width: 12px; height: 12px; background: #e6e6e6; margin-right: 2px; }
.shading { gap: 0; }
.shading .ic { width: 15px; height: 15px; }
.vp-info {
    position: absolute;
    left: 9px;
    top: 59px;
    font-weight: 500;
    color: #f0f0f0;
    text-shadow: 0 0 2px #000, 1px 1px 1px #000;
}
.vp-info div { height: 18px; line-height: 16px; }
.region-arrow { position: absolute; left: -3px; top: 67px; color: #aaa; }
.options {
    position: absolute;
    left: 1455px;
    top: 28px;
    width: 64px;
    height: 19px;
    gap: 4px;
}
.nav-gizmos { position: absolute; left: 1272px; top: 139px; display: flex; flex-direction: column; gap: 1px; }
.nav-btn {
    width: 30px;
    height: 30px;
    border-radius: 50%;
    background: #2e2e2e;
    display: flex;
    align-items: center;
    justify-content: center;
    color: #e0e0e0;
}
.vp-tabstrip {
    position: absolute;
    left: 1506px;
    top: 50px;
    width: 20px;
    bottom: 0;
    background: #363636;
    padding-top: 6px;
    display: flex;
    flex-direction: column;
    gap: 5px;
}
.vtab {
    width: 18px;
    height: 40px;
    background: #424242;
    border: 1px solid #2c2c2c;
    border-left: 0;
    border-radius: 0 4px 4px 0;
    display: flex;
    align-items: center;
    justify-content: center;
    color: #e6e6e6;
}
.vtab.dark-tab { background: #363636; color: #c4c4c4; }
.vtab b { writing-mode: vertical-rl; font-weight: 400; }
.n-panel {
    position: absolute;
    left: 1315px;
    top: 53px;
    width: 191px;
    height: 388px;
    padding: 0 9px;
    background: rgba(68, 68, 68, .5);
    border-radius: 5px 0 0 5px;
}
.n-head { height: 26px; padding-top: 1px; display: flex; align-items: center; color: #e0e0e0; text-shadow: 1px 1px 1px #222; }
.n-head .chev { margin: 0 2px 0 -3px; color: #b5b5b5; }
.grip { width: 12px; height: 6px; margin-left: auto; color: #9a9a9a; flex: none; }
.n-head .grip { margin-right: -2px; }
.n-label { height: 16px; line-height: 16px; margin: 4px 0 3px; color: #cfcfcf; }
.n-label.first { margin-top: 9px; }
.n-group { display: flex; flex-direction: column; gap: 1px; }
.n-row { display: flex; height: 19px; align-items: center; }
.nf {
    width: 126px;
    height: 19px;
    background: #545454;
    display: flex;
    align-items: center;
    justify-content: space-between;
    padding: 0 13px;
    color: #e2e2e2;
}
.n-group.wide .nf { width: 166px; }
.nf.top, .nfc.top { border-radius: 4px 4px 0 0; }
.nf.bot, .nfc.bot { border-radius: 0 0 4px 4px; }
.nf em { color: #dcdcdc; }
.lock { width: 14px; height: 14px; color: #cfcfcf; margin-left: 17px; }
.euler {
    height: 18px;
    width: 166px;
    margin-top: 3px;
    display: flex;
    align-items: center;
    justify-content: space-between;
    background: #282828;
    border-radius: 4px;
    padding: 0 3px 0 7px;
    color: #e2e2e2;
}

/* timeline */
.timeline {
    flex: 1;
    display: flex;
    flex-direction: column;
    border-radius: 6px 6px 0 0;
    background: #2b2b2b;
    overflow: hidden;
}
.tl-head {
    height: 26px;
    flex: none;
    display: flex;
    align-items: center;
    padding: 0 0 1px 8px;
    background: #303030;
    gap: 6px;
}
.tl-menus .playback { width: 71px; gap: 6px; }
.tl-menus .keying { width: 58px; gap: 6px; }
.tl-plain { margin-left: 4px; gap: 15px; }
.rec-btn { position: absolute; left: 676px; top: 824px; width: 38px; gap: 0; }
.transport { position: absolute; left: 721px; top: 824px; width: 118px; }
.transport .ic, .frame-range .ic { width: 12px; height: 12px; }
.frame-now {
    position: absolute;
    left: 1252px;
    top: 824px;
    width: 74px;
    height: 20px;
    background: #545454;
    border-radius: 4px;
    display: flex;
    align-items: center;
    justify-content: center;
}
.frame-range { position: absolute; left: 1332px; top: 824px; width: 188px; gap: 0; }
.frame-range .clock { width: 19px; }
.frame-range .clock .ic { width: 15px; height: 15px; }
.seg.grey.range { padding: 0 15px; justify-content: space-between; box-shadow: inset 1px 0 0 #3a3a3a; }
.seg.grey.start-seg { width: 89px; }
.seg.grey.end-seg { width: 80px; padding-right: 8px; }
.tl-body { flex: 1; display: flex; min-height: 0; }
.tl-channels { width: 200px; background: #1d1d1d; flex: none; }
.tl-search {
    height: 19px;
    margin: 0 -1px 4px 1px;
    display: flex;
    align-items: center;
    gap: 6px;
    background: #1d1d1d;
    border: 1px solid #353535;
    border-radius: 4px;
    padding-left: 2px;
    position: relative;
    overflow: hidden;
}
.swap { width: 22px; height: 100%; background: #545454; display: flex; align-items: center; justify-content: center; }
.summary {
    height: 18px;
    display: flex;
    align-items: center;
    gap: 6px;
    padding-left: 3px;
    background: #4d2a2a;
    border-radius: 4px 0 0 4px;
    color: #c8c8c8;
}
.tl-main { flex: 1; display: flex; flex-direction: column; position: relative; min-width: 0; }
.ruler {
    height: 22px;
    flex: none;
    display: flex;
    align-items: center;
    padding: 0 0 2px 5.500px;
    background: #1d1d1d;
    color: #b4b4b4;
}
.ruler span { width: 84.500px; flex: none; text-align: center; }
.track {
    flex: 1;
    position: relative;
    background-color: #222;
    background-image:
        linear-gradient(90deg, #151515 1px, transparent 1px),
        linear-gradient(90deg, #282828 1px, transparent 1px),
        linear-gradient(90deg, transparent 137px, #303030 137px, #303030 681px, transparent 681px);
    background-size: 84.500px 100%, 42.250px 100%, 100% 100%;
    background-position: 48px 0, 48px 0, 0 0;
}
.start-line { position: absolute; left: 137px; top: 0; bottom: 0; width: 1px; background: #000; }
.tl-scroll {
    position: absolute;
    left: 8px;
    right: 10px;
    bottom: 3px;
    height: 7px;
    border-radius: 4px;
    background: #555;
}
.playhead {
    position: absolute;
    left: 667px;
    top: 2px;
    width: 29px;
    height: 18px;
    border-radius: 4px;
    background: #4772b3;
    color: #fff;
    display: flex;
    align-items: center;
    justify-content: center;
}
.playhead::after {
    content: "";
    position: absolute;
    left: 14px;
    top: 18px;
    width: 1px;
    height: 126px;
    background: #4772b3;
}
.tl-collapse { position: absolute; right: 0; top: 18px; transform: rotate(180deg); color: #999; }

/* outliner */
.outliner {
    height: 307px;
    flex: none;
    background: #282828;
    border-radius: 6px;
    overflow: hidden;
}
.ol-head { height: 26px; display: flex; align-items: center; gap: 6px; padding: 0 8px; background: #282828; }
.ol-search { width: 114px; margin-left: 11px; }
.ol-head .seg-alone { width: 20px; }
.ol-row { height: 20px; display: flex; align-items: center; color: #c8c8c8; }
.scene-row { padding-left: 22px; gap: 7px; padding-top: 2px; }
.col-row { padding-left: 22px; gap: 3px; background: #2e2e2e; padding-top: 1px; }
.col-row > span:nth-child(3) { margin-left: 1px; padding-top: 1px; }
.box-row { padding-left: 28px; gap: 0; background: #334d80; }
.ol-ic { width: 20px; height: 20px; border-radius: 5px; background: #545454; border: 1px solid #777; display: flex; align-items: center; justify-content: center; }
.col-row .ol-ic { height: 19px; }
.ol-ic.orange { background: #54698f; border-color: #6d80a3; margin: 0 5px 0 3px; }
.tree-line { width: 1px; height: 12px; background: #8292ad; margin-right: 14px; }
.orange-text { color: #efa537; width: 44px; padding-top: 1px; }
.teal { color: #1ec1aa; }
.ol-right { margin-left: auto; display: flex; align-items: center; gap: 4px; padding-right: 9px; color: #e6e6e6; }
.ol-check { width: 12px; height: 12px; background: #e6e6e6; border-radius: 2px; color: #222; display: flex; align-items: center; justify-content: center; margin-right: 2px; }

/* properties */
.properties {
    flex: 1;
    display: flex;
    flex-direction: column;
    background: #303030;
    border-radius: 6px;
    overflow: hidden;
}
.pr-head { height: 25px; flex: none; display: flex; align-items: center; padding: 0 5px 0 9px; background: #282828; }
.pr-search { width: 114px; margin-left: 63px; }
.pr-body { flex: 1; display: flex; min-height: 0; }
.pr-tabs { width: 28px; flex: none; background: #1d1d1d; padding-top: 8px; display: flex; flex-direction: column; }
.pt { height: 28px; flex: none; display: flex; align-items: center; justify-content: center; padding-left: 2px; border-radius: 4px 0 0 4px; margin-left: 2px; }
.pt.active { background: #303030; }
.pt-sep { height: 8px; flex: none; position: relative; }
.pt-sep::after { content: ""; position: absolute; left: 0; right: 0; top: 4px; height: 1px; background: #262626; }
.c-light { color: #d8d8d8; }
.c-red { color: #b5555f; }
.c-orange { color: #e58f4c; }
.c-blue { color: #6d96d9; }
.c-green { color: #1eb686; }
.pr-content { flex: 1; padding: 0 4px 0 8px; min-width: 0; }
.pr-title { height: 36px; display: flex; align-items: center; gap: 8px; padding: 0 3px 0 2px; color: #d8d8d8; }
.pr-name { height: 20px; margin-top: 9px; display: flex; border-radius: 4px; overflow: hidden; background: #1d1d1d; }
.pr-name-ic { width: 31px; background: #282828; display: flex; align-items: center; justify-content: center; color: #d8d8d8; }
.pr-name-text { padding-left: 8px; line-height: 19px; color: #e0e0e0; }
.panel { background: #3d3d3d; border-radius: 4px; margin-bottom: 2px; }
.pr-name + .panel { margin-top: 9px; }
.panel-head { height: 25px; display: flex; align-items: center; color: #d8d8d8; padding: 1px 7px 0 6px; text-shadow: 1px 1px 1px #222; }
.panel.open .panel-head { height: 26px; }
.panel-head .chev { margin-right: 2px; color: #b5b5b5; }
.pg { margin-bottom: 6px; display: flex; flex-direction: column; gap: 1px; }
.panel-head + .pg { margin-top: 8px; }
.pf { display: flex; height: 19px; align-items: center; }
.pf label { width: 99px; text-align: right; color: #d4d4d4; }
.nfc { width: 118px; height: 19px; margin-left: 10px; background: #545454; display: flex; align-items: center; justify-content: center; color: #e2e2e2; }
.pf .sel { width: 118px; height: 18px; margin-left: 10px; color: #e2e2e2; }
.pf i { width: 21px; }
.pf .lock { margin-left: 4px; margin-right: 3px; }
.anim { width: 14px; height: 14px; color: #cfcfcf; margin-left: 3px; }
.delta { height: 23px; margin-top: 9px; display: flex; align-items: center; gap: 1px; padding-left: 21px; color: #d8d8d8; }

/* status bar */
.statusbar {
    height: 18px;
    flex: none;
    display: flex;
    align-items: center;
    padding: 3px 0 0 16px;
    background: #181818;
    color: #a9a9a9;
    position: relative;
}
.st { width: 211px; display: flex; align-items: center; gap: 11px; }
.mouse { width: 11px; height: 14px; color: #a9a9a9; margin-top: -3px; }
.version { margin-left: auto; padding-right: 10px; color: #a0a0a0; }

/* file browser dialog */
.dialog {
    position: absolute;
    left: 227px;
    top: 133px;
    width: 1061px;
    height: 637px;
    display: flex;
    flex-direction: column;
    border-radius: 12px 12px 3px 3px;
    overflow: hidden;
    background: #303030;
    box-shadow: 0 0 0 1px #1f1f1f, 0 3px 14px rgba(0, 0, 0, .45);
}
.dlg-title {
    height: 37px;
    flex: none;
    position: relative;
    display: flex;
    align-items: center;
    justify-content: center;
    background: #e9e9e9;
    border-bottom: 1px solid #c8c8c8;
    color: #3d3d3d;
    font: bold 14.800px "Noto Sans", sans-serif;
}
.dlg-close {
    position: absolute;
    right: 7px;
    top: 7px;
    width: 24px;
    height: 24px;
    border-radius: 50%;
    background: #dadada;
    display: flex;
    align-items: center;
    justify-content: center;
    color: #333;
}
.dlg-close .ic { width: 14px; height: 14px; }
.dlg-body { flex: 1; display: flex; min-height: 0; }
.dlg-side { width: 240px; flex: none; padding: 2px 8px; display: flex; flex-direction: column; gap: 2px; }
.fp-panel { background: #3d3d3d; border-radius: 4px; }
.fp-panel:first-child .panel-head { height: 26px; }
.add-bm {
    height: 18px;
    margin: 8px 9px 9px;
    display: flex;
    align-items: center;
    background: #545454;
    border-radius: 4px;
    padding-left: 5px;
    color: #d8d8d8;
    box-shadow: 0 1px 0 #2f2f2f;
}
.add-bm .ic-xs { width: 12px; height: 12px; }
.add-bm span { flex: 1; text-align: center; padding-top: 1px; }
.dlg-main { flex: 1; display: flex; flex-direction: column; min-width: 0; }
.fb-tools { height: 42px; flex: none; display: flex; align-items: flex-start; padding: 8px 9px 0; }
.fb-tools > * { height: 25px; }
.fb-nav { width: 102px; }
.fb-nav .seg { flex: 1; }
.w25a { width: 25px; margin-left: 9px; }
.path {
    width: 320px;
    margin-left: 10px;
    background: #1d1d1d;
    border-radius: 4px;
    padding-left: 7px;
    line-height: 26px;
    color: #d8d8d8;
}
.fb-search { width: 125px; margin-left: 9px; }
.fb-view { width: 100px; margin-left: 9px; gap: 0; }
.fb-view .ic, .fb-filter .ic, .gear-btn .ic { width: 18px; height: 18px; }
.fb-filter { width: 51px; margin-left: 9px; gap: 0; }
.gear-btn { width: 25px; margin-left: 9px; background: #4772b3; color: #fff; }
.fb-mid { flex: 1; display: flex; min-height: 0; }
.fb-list { width: 581px; flex: none; display: flex; flex-direction: column; border-right: 1px solid #1d1d1d; }
.fb-cols {
    height: 24px;
    flex: none;
    display: flex;
    align-items: center;
    background: #303030;
    border-top: 1px solid #222;
    border-bottom: 1px solid #1d1d1d;
    color: #cfcfcf;
    padding-top: 1px;
}
.fb-cols span { height: 14px; display: flex; align-items: center; position: relative; }
.col-name { width: 363px; padding-left: 10px; border-right: 1px solid #444; }
.col-date { width: 126px; padding-left: 12px; border-right: 1px solid #444; }
.col-size { padding-left: 12px; }
.sort { position: absolute; right: 6px; border: 4px solid transparent; border-top: 6px solid #999; top: 4px; }
.fb-rows {
    flex: 1;
    position: relative;
    padding: 12px 0 0 28px;
    color: #777;
    background: repeating-linear-gradient(#2a2a2a 0 21px, #272727 21px 41px);
}
.fb-scroll { position: absolute; right: 1px; top: 9px; bottom: 2px; width: 3px; background: #484848; border-radius: 2px; }
.op-panel { flex: 1; padding-top: 9px; min-width: 0; }
.presets { height: 18px; display: flex; margin: 0 10px 0 8px; border-radius: 4px; overflow: hidden; }
.presets-name { flex: 1; background: #262626; display: flex; align-items: center; justify-content: space-between; padding: 1px 3px 0 7px; color: #d0d0d0; }
.preset-btn { width: 20px; background: #545454; margin-left: 1px; display: flex; align-items: center; justify-content: center; color: #e0e0e0; }
.op-row { display: flex; height: 19px; align-items: center; margin-right: 10px; }
.op-row.format { margin-top: 18px; }
.op-row.copyright { margin-top: 6px; }
.op-row label, .op-check label { width: 92px; text-align: right; color: #bdbdbd; flex: none; }
.op-sel { flex: 1; height: 19px; margin-left: 10px; background: #1f1f1f; color: #d8d8d8; border: 1px solid #333; }
.op-row.format .op-sel { background: #282828; }
.op-check { height: 20px; display: flex; align-items: center; color: #cfcfcf; }
.op-check.remember { margin-top: 5px; }
.op-check.gap5 { margin-top: 5px; }
.cb {
    width: 13px;
    height: 13px;
    margin-left: 9px;
    flex: none;
    background: #545454;
    border-radius: 3px;
    display: flex;
    align-items: center;
    justify-content: center;
    color: #fff;
}
.cb.on { background: #4772b3; }
.op-check span { margin-left: 5px; }
.op-head {
    height: 27px;
    padding: 2px 0 0 21px;
    display: flex;
    align-items: center;
    gap: 1px;
    color: #d8d8d8;
    margin-right: 1px;
}
.op-head .ic-14 { margin: 0 2px 0 -2px; }
.op-head.include { height: 25px; margin-top: 9px; padding-top: 0; }
.op-head.plain { height: 25px; padding-top: 0; }
.op-head .anim-cb { margin: 0 3px 0 -1px; }
.op-sub { background: #2a2a2a; padding: 7px 0 6px; margin-right: 1px; border-radius: 0 0 5px 5px; }
.op-sub.short { padding: 8px 0 8px; }
.fb-bottom {
    height: 42px;
    flex: none;
    display: flex;
    align-items: flex-start;
    padding: 9px 9px 0;
}
.file-name {
    width: 530px;
    height: 25px;
    display: flex;
    align-items: center;
    gap: 9px;
    padding: 0 7px;
    background: #1d1d1d;
    border-radius: 4px;
    color: #d8d8d8;
}
.act {
    height: 25px;
    border-radius: 4px;
    display: flex;
    align-items: center;
    justify-content: center;
    color: #e0e0e0;
    box-shadow: 0 1px 0 #222;
}
.cancel { width: 128px; margin-left: 9px; background: #545454; }
.export { width: 126px; margin-left: 9px; background: #5c87c9; color: #fff; }
.cursor { position: absolute; left: 1268px; top: 752px; }
```
